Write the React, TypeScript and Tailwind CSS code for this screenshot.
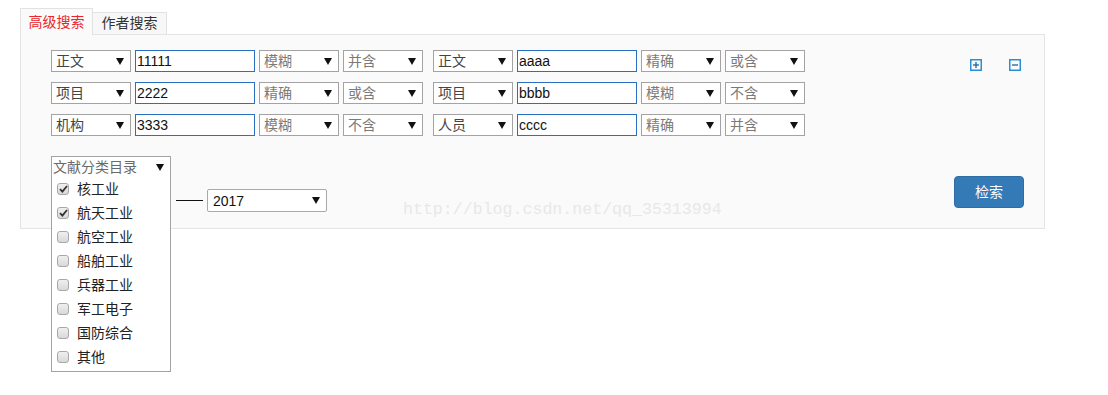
const font = "font-['Liberation_Sans','Noto_Sans_CJK_SC',sans-serif]";

const Arrow = () => (
    <svg width="8" height="7" viewBox="0 0 8 7" className="shrink-0">
        <path d="M0 0H8L4 7Z" fill="#111" />
    </svg>
);

const Select = ({ value, dark, w = "w-[80px]" }: { value: string; dark?: boolean; w?: string }) => (
    <div
        className={`flex h-[22px] ${w} items-center justify-between border border-[#a3a3a3] bg-white pl-[4px] pr-[6px] text-[14px] leading-none ${
            dark ? "text-[#444]" : "text-[#7a7a7a]"
        }`}
    >
        <span>{value}</span>
        <Arrow />
    </div>
);

const Input = ({ value }: { value: string }) => (
    <div className="flex h-[22px] w-[120px] items-center border border-[#2a6fc2] bg-white pl-[1px] text-[14px] leading-none text-[#111]">
        {value}
    </div>
);

const rows = [
    ["正文", "11111", "模糊", "并含", "正文", "aaaa", "精确", "或含"],
    ["项目", "2222", "精确", "或含", "项目", "bbbb", "模糊", "不含"],
    ["机构", "3333", "模糊", "不含", "人员", "cccc", "精确", "并含"],
];

const categories = [
    { label: "核工业", checked: true },
    { label: "航天工业", checked: true },
    { label: "航空工业", checked: false },
    { label: "船舶工业", checked: false },
    { label: "兵器工业", checked: false },
    { label: "军工电子", checked: false },
    { label: "国防综合", checked: false },
    { label: "其他", checked: false },
];

const Check = ({ checked }: { checked: boolean }) => (
    <span className="flex h-[12px] w-[12px] items-center justify-center rounded-[3px] border border-[#a8a8a8] bg-gradient-to-b from-[#f0f0f0] to-[#d8d8d8]">
        {checked && (
            <svg width="9" height="8" viewBox="0 0 9 8">
                <path d="M1 4.2L3.4 6.6L8 1" stroke="#333" strokeWidth="1.8" fill="none" />
            </svg>
        )}
    </span>
);

const SquareIcon = ({ plus }: { plus?: boolean }) => (
    <svg width="12" height="12" viewBox="0 0 12 12">
        <rect x="0.75" y="0.75" width="10.5" height="10.5" fill="none" stroke="#2a8fd6" strokeWidth="1.5" />
        <path d="M3 6H9" stroke="#2a6b9c" strokeWidth="1.4" />
        {plus && <path d="M6 3V9" stroke="#2a6b9c" strokeWidth="1.4" />}
    </svg>
);

export default function App() {
    return (
        <div className={`relative min-h-[395px] bg-white pl-[20px] pt-[8px] ${font}`}>
            {/* tabs */}
            <div className="flex items-end">
                <div className="relative z-10 -mb-px flex h-[27px] w-[73px] items-center justify-center border border-b-0 border-[#e2e2e2] bg-[#fafafa] text-[14px] text-[#e8262c]">
                    高级搜索
                </div>
                <div className="flex h-[22px] w-[74px] items-center justify-center border border-b-0 border-l-0 border-[#e2e2e2] bg-[#f7f7f7] text-[14px] text-[#333]">
                    作者搜索
                </div>
            </div>

            {/* panel */}
            <div className="w-[1025px] border border-[#e4e4e4] bg-[#fafafa] pb-[16px] pl-[30px] pr-[23px] pt-[15px]">
                <div className="flex justify-between">
                    <div className="flex flex-col gap-[10px]">
                        {rows.map((r, i) => (
                            <div key={i} className="flex gap-[4px]">
                                <Select value={r[0]} dark />
                                <Input value={r[1]} />
                                <Select value={r[2]} />
                                <Select value={r[3]} />
                                <div className="w-[2px]" />
                                <Select value={r[4]} dark />
                                <Input value={r[5]} />
                                <Select value={r[6]} />
                                <Select value={r[7]} />
                            </div>
                        ))}
                    </div>
                    <div className="mt-[9px] flex gap-[27px]">
                        <SquareIcon plus />
                        <SquareIcon />
                    </div>
                </div>

                <div className="mt-[20px] flex items-start justify-between">
                    <div className="flex items-start">
                        <div className="relative w-[120px]">
                            <div className="flex h-[22px] items-center justify-between border border-[#a3a3a3] bg-white pl-[1px] pr-[6px] text-[14px] leading-none text-[#6a6a6a]">
                                <span>文献分类目录</span>
                                <Arrow />
                            </div>
                            <ul className="absolute left-0 top-[21px] z-20 w-[120px] border border-t-0 border-[#a3a3a3] bg-white pb-[2px]">
                                {categories.map((c) => (
                                    <li key={c.label} className="flex h-[24px] items-center gap-[8px] pl-[5px] text-[14px] text-[#222]">
                                        <Check checked={c.checked} />
                                        <span>{c.label}</span>
                                    </li>
                                ))}
                            </ul>
                        </div>
                        <div className="ml-[5px] mt-[33px] flex items-center gap-[4px]">
                            <div className="h-px w-[27px] bg-[#111]" />
                            <div className="flex h-[23px] w-[120px] items-center justify-between rounded-[2px] border border-[#a9a9a9] bg-white pl-[5px] pr-[6px] text-[14px] leading-none text-[#111]">
                                <span>2017</span>
                                <Arrow />
                            </div>
                        </div>
                    </div>
                    <button className="mr-[-3px] mt-[20px] flex h-[32px] w-[70px] items-center justify-center rounded-[4px] border border-[#2e6da4] bg-[#337ab7] text-[14px] text-white">
                        检索
                    </button>
                </div>
            </div>

            {/* watermark */}
            <div className="pointer-events-none absolute left-[403px] top-[198px] font-['Liberation_Mono',monospace] text-[16.6px] text-[#e8e8e8]">
                http://blog.csdn.net/qq_35313994
            </div>
        </div>
    );
}
